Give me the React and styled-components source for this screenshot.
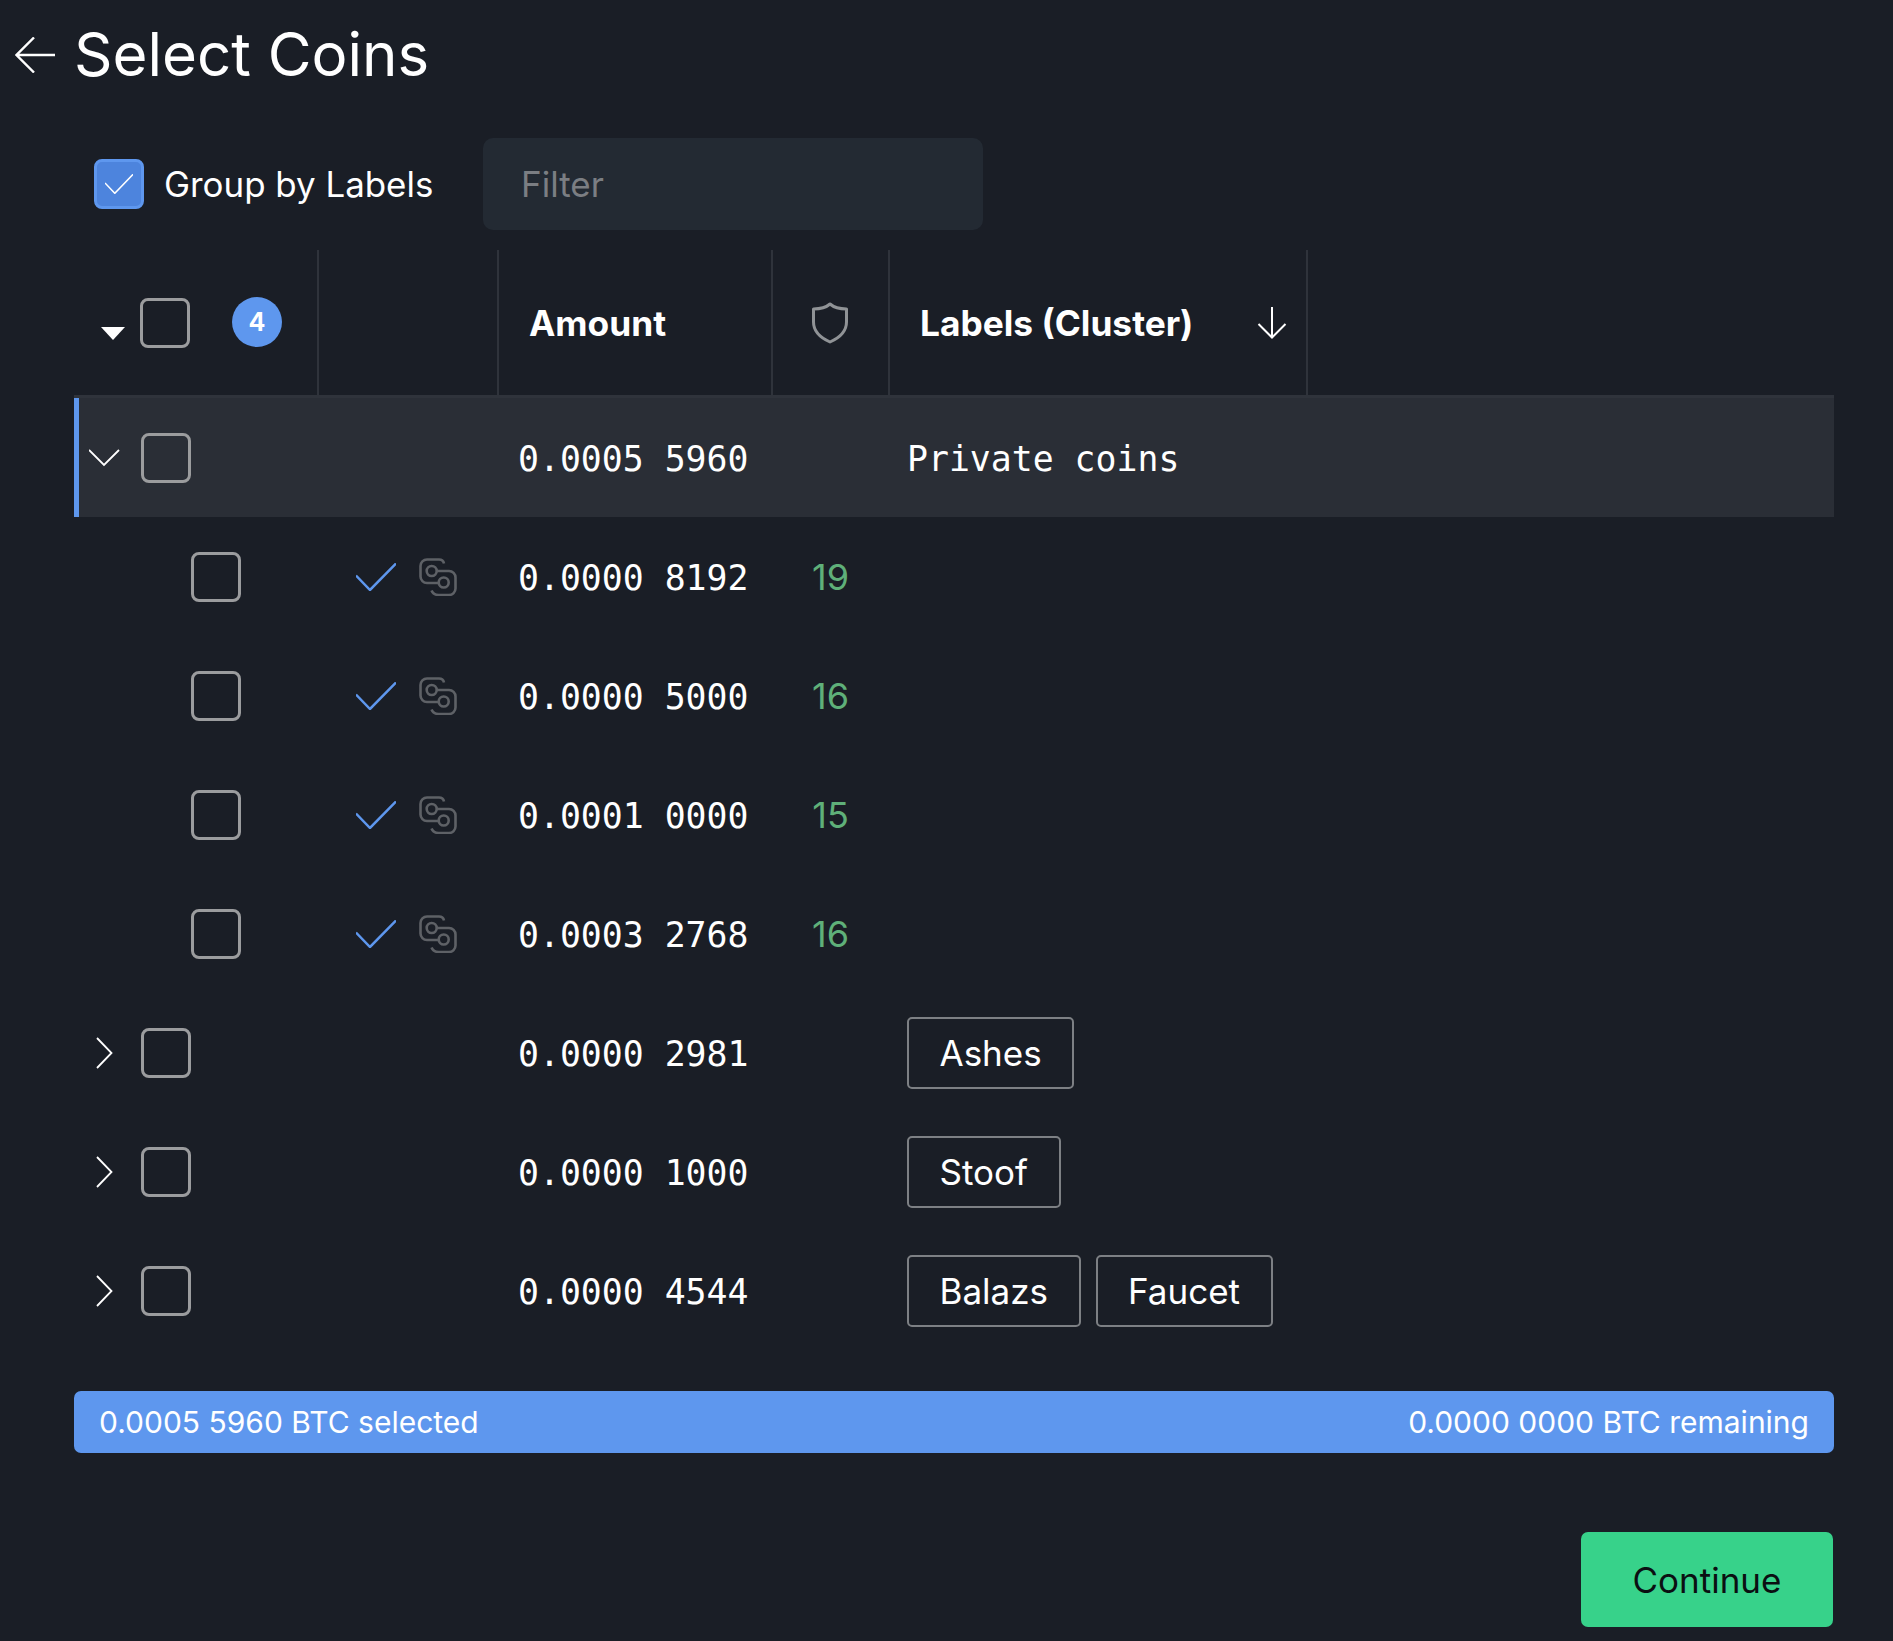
import styled, { createGlobalStyle } from "styled-components";

const GlobalStyle = createGlobalStyle`
  * {
    box-sizing: border-box;
  }

  body {
    margin: 0;
    background: #1a1e26;
    color: #ffffff;
    font-family: "Inter", sans-serif;
  }
`;

const Page = styled.div`
  width: 1893px;
  height: 1641px;
  overflow: hidden;
  background: #1a1e26;
  display: flex;
  flex-direction: column;
`;

const TitleRow = styled.div`
  height: 138px;
  padding: 19px 0 0 15px;
  display: flex;
  align-items: flex-start;
  gap: 19px;
`;

const BackIcon = styled.svg`
  width: 40px;
  height: 36px;
  margin-top: 18px;
  flex-shrink: 0;
`;

const Title = styled.h1`
  margin: 0;
  font-size: 60px;
  line-height: 70px;
  font-weight: 400;
`;

const Toolbar = styled.div`
  height: 92px;
  margin-bottom: 20px;
  padding-left: 94px;
  display: flex;
  align-items: center;
`;

const GroupLabel = styled.span`
  width: 339px;
  padding-left: 20px;
  font-size: 34.9px;
`;

const FilterBox = styled.div`
  width: 500px;
  height: 92px;
  padding-left: 38px;
  display: flex;
  align-items: center;
  background: #232a33;
  border-radius: 10px;
  color: #7b7e83;
  font-size: 35px;
`;

const Box = styled.span`
  width: 50px;
  height: 50px;
  flex-shrink: 0;
  display: flex;
  align-items: center;
  justify-content: center;
  border-radius: 8px;
  border: 3px solid ${(p) => (p.$checked ? "#5e97ee" : "#9b9c9e")};
  background: ${(p) => (p.$checked ? "#4d84dd" : "transparent")};
`;

const Table = styled.div`
  margin: 0 59px 0 74px;
`;

const columns = "244px 179px 275px 116px 1fr";

const HeaderRow = styled.div`
  display: grid;
  grid-template-columns: 245px 180px 274px 117px 418px 1fr;
  height: 148px;
  border-bottom: 3px solid #2f333b;
`;

const HeaderCell = styled.div`
  display: flex;
  align-items: center;
  justify-content: ${(p) => (p.$center ? "center" : "flex-start")};
  padding-left: ${(p) => p.$pad || 0}px;
  padding-right: ${(p) => (p.$center ? 2 : 0)}px;
  padding-top: 1px;
  border-right: ${(p) => (p.$last ? "none" : "2px solid #2f333b")};
  font-size: 35.3px;
  font-weight: 700;
`;

const SortArrow = styled.svg`
  width: 30px;
  height: 32px;
  margin-left: auto;
  margin-right: 19px;
`;

const Caret = styled.span`
  width: 0;
  height: 0;
  margin: 20px 15px 0 0;
  border-left: 12.5px solid transparent;
  border-right: 12.5px solid transparent;
  border-top: 13px solid #ffffff;
`;

const Badge = styled.span`
  width: 50px;
  height: 50px;
  margin-left: 42px;
  margin-top: -2px;
  border-radius: 50%;
  background: #5e97ee;
  display: flex;
  align-items: center;
  justify-content: center;
  font-size: 25px;
  font-weight: 700;
`;

const Row = styled.div`
  display: grid;
  grid-template-columns: ${columns};
  height: 119px;
  align-items: center;
  background: ${(p) => (p.$active ? "#2a2e36" : "transparent")};
  box-shadow: ${(p) => (p.$active ? "inset 5px 0 0 #5e97ee" : "none")};
`;

const SelectCell = styled.div`
  display: flex;
  align-items: center;
  padding-left: ${(p) => (p.$child ? 117 : 15)}px;
`;

const Chevron = styled.svg`
  width: 32px;
  height: 32px;
  margin-right: 20px;
  flex-shrink: 0;
`;

const StatusCell = styled.div`
  display: flex;
  align-items: center;
  padding-left: 38px;
  gap: 23px;
`;

const Amount = styled.div`
  padding: 2px 0 0 21px;
  font-family: "DejaVu Sans Mono", monospace;
  font-size: 34.8px;
  white-space: pre;
`;

const Anon = styled.div`
  padding-left: 1px;
  text-align: center;
  color: #5fb079;
  font-size: 36px;
`;

const LabelCell = styled.div`
  padding-left: 19px;
  display: flex;
  align-items: center;
  gap: 15px;
`;

const PlainLabel = styled.span`
  padding-top: 2px;
  font-family: "DejaVu Sans Mono", monospace;
  font-size: 34.8px;
`;

const Tag = styled.span`
  height: 72px;
  padding: 1px 30.5px 0;
  display: flex;
  align-items: center;
  border: 2.5px solid #7d8084;
  border-radius: 5px;
  font-size: 35px;
`;

const StatusBar = styled.div`
  margin: 41px 59px 0 74px;
  height: 62px;
  padding: 0 25px;
  display: flex;
  align-items: center;
  justify-content: space-between;
  background: #5e97ee;
  border-radius: 7px;
  font-size: 30px;
`;

const Footer = styled.div`
  margin: 79px 60px 0 0;
  display: flex;
  justify-content: flex-end;
`;

const ContinueButton = styled.button`
  width: 252px;
  height: 95px;
  padding: 1px 0 0;
  border: none;
  border-radius: 7px;
  background: #37d28a;
  color: #0b0f12;
  font-family: "Inter", sans-serif;
  font-size: 35px;
`;

const ShieldIcon = () => (
  <svg width="36" height="42" viewBox="0 0 36 42" fill="none" stroke="#909396" strokeWidth="3">
    <path
      d="M18 2 C22 5.5 27 7 34.5 7 V20 C34.5 29 27 36 18 40 C9 36 1.5 29 1.5 20 V7 C9 7 14 5.5 18 2 Z"
      strokeLinejoin="round"
    />
  </svg>
);

const CheckIcon = ({ width = 40, height = 28, color = "#5e97ee", stroke = 2.5 }) => (
  <svg width={width} height={height} viewBox="0 0 40 28" fill="none" stroke={color} strokeWidth={stroke} preserveAspectRatio="none">
    <path d="M0 12.5 L14 27 L40 0.5" />
  </svg>
);

const LinkIcon = () => (
  <svg width="38" height="38" viewBox="0 0 38 38" fill="none" stroke="#5e6166" strokeWidth="2.6">
    <path d="M25 5.5 C24.5 3 22.5 1.5 20 1.5 H8 A6.5 6.5 0 0 0 1.5 8 V18.5 A6.5 6.5 0 0 0 8 25 H20" />
    <path d="M18 13 H30 A6.5 6.5 0 0 1 36.5 19.5 V30.5 A6.5 6.5 0 0 1 30 37 H19.5 C16 37 13.5 35 12.5 32.5" />
    <circle cx="12.7" cy="13" r="5" />
    <circle cx="24.7" cy="24.5" r="5" />
  </svg>
);

const Toggle = ({ open }) => (
  <Chevron viewBox="0 0 32 32" fill="none" stroke="#ffffff" strokeWidth="1.8">
    {open ? <path d="M0 8 L15 23 L30 8" /> : <path d="M8 1 L22.5 16 L8 31" />}
  </Chevron>
);

const coins = [
  { amount: "0.0000 8192", anon: 19 },
  { amount: "0.0000 5000", anon: 16 },
  { amount: "0.0001 0000", anon: 15 },
  { amount: "0.0003 2768", anon: 16 },
];

const groups = [
  { amount: "0.0000 2981", labels: ["Ashes"] },
  { amount: "0.0000 1000", labels: ["Stoof"] },
  { amount: "0.0000 4544", labels: ["Balazs", "Faucet"] },
];

const App = () => {
  return (
    <Page>
      <GlobalStyle />
      <TitleRow>
        <BackIcon viewBox="0 0 40 36" fill="none" stroke="#ffffff" strokeWidth="2.4">
          <path d="M40 18 H2 M19 0.5 L1.5 18 L19 35.5" />
        </BackIcon>
        <Title>Select Coins</Title>
      </TitleRow>

      <Toolbar>
        <Box $checked>
          <CheckIcon width={28} height={20} color="#ffffff" stroke={2.2} />
        </Box>
        <GroupLabel>Group by Labels</GroupLabel>
        <FilterBox>Filter</FilterBox>
      </Toolbar>

      <Table>
        <HeaderRow>
          <HeaderCell $pad={27}>
            <Caret />
            <Box />
            <Badge>4</Badge>
          </HeaderCell>
          <HeaderCell />
          <HeaderCell $pad={30}>Amount</HeaderCell>
          <HeaderCell $center>
            <ShieldIcon />
          </HeaderCell>
          <HeaderCell $pad={30}>
            Labels (Cluster)
            <SortArrow viewBox="0 0 30 32" fill="none" stroke="#ffffff" strokeWidth="2">
              <path d="M15 0 V30 M1.5 17 L15 30.5 L28.5 17" />
            </SortArrow>
          </HeaderCell>
          <HeaderCell $last />
        </HeaderRow>

        <Row $active>
          <SelectCell>
            <Toggle open />
            <Box />
          </SelectCell>
          <div />
          <Amount>0.0005 5960</Amount>
          <div />
          <LabelCell>
            <PlainLabel>Private coins</PlainLabel>
          </LabelCell>
        </Row>

        {coins.map((coin) => (
          <Row key={coin.amount}>
            <SelectCell $child>
              <Box />
            </SelectCell>
            <StatusCell>
              <CheckIcon />
              <LinkIcon />
            </StatusCell>
            <Amount>{coin.amount}</Amount>
            <Anon>{coin.anon}</Anon>
            <div />
          </Row>
        ))}

        {groups.map((group) => (
          <Row key={group.amount}>
            <SelectCell>
              <Toggle />
              <Box />
            </SelectCell>
            <div />
            <Amount>{group.amount}</Amount>
            <div />
            <LabelCell>
              {group.labels.map((label) => (
                <Tag key={label}>{label}</Tag>
              ))}
            </LabelCell>
          </Row>
        ))}
      </Table>

      <StatusBar>
        <span>0.0005 5960 BTC selected</span>
        <span>0.0000 0000 BTC remaining</span>
      </StatusBar>

      <Footer>
        <ContinueButton>Continue</ContinueButton>
      </Footer>
    </Page>
  );
};

export default App;
